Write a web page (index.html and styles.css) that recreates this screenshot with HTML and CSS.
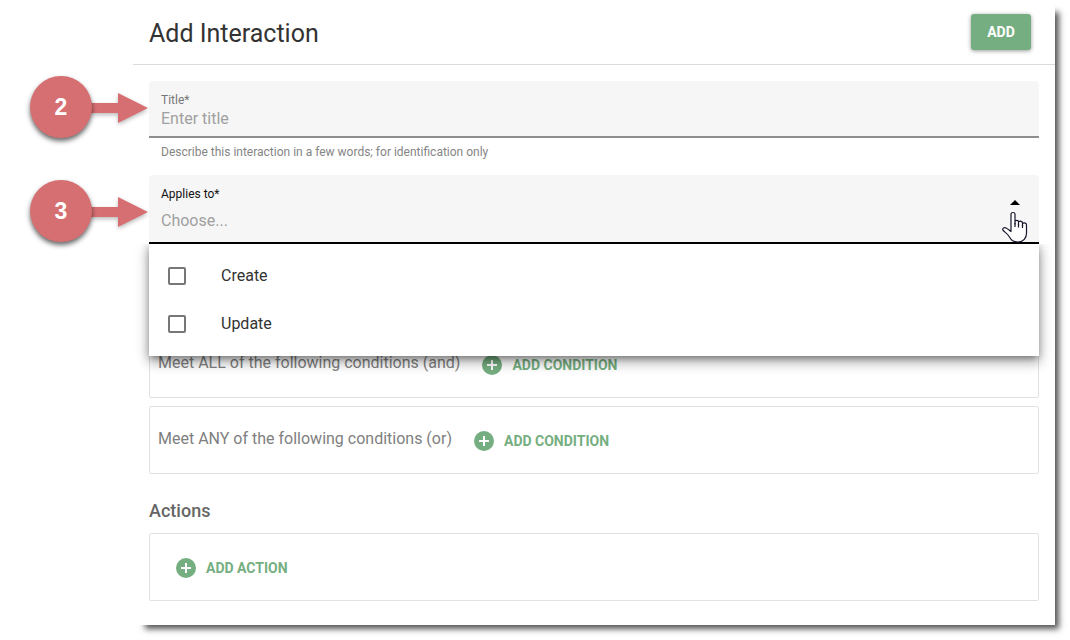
FILE: index.html
```html
<!DOCTYPE html>
<html lang="en">
<head>
<meta charset="utf-8">
<title>Add Interaction</title>
<link rel="stylesheet" href="styles.css">
</head>
<body>
<svg class="sprite" aria-hidden="true">
  <symbol id="plus" viewBox="0 0 20 20"><circle cx="10" cy="10" r="10" fill="currentColor"/><path d="M10 5v10M5 10h10" stroke="#fff" stroke-width="2"/></symbol>
  <symbol id="arrow" viewBox="0 0 58 30"><path d="M0 10H28V0L58 15L28 30V20H0Z" fill="#d66f72"/></symbol>
</svg>
<main class="panel">
  <header class="header">
    <h1 class="title">Add Interaction</h1>
    <button class="add" type="button">ADD</button>
  </header>
  <form class="form">
    <div class="group">
      <div class="field">
        <label class="label" for="title">Title*</label>
        <input class="input" id="title" type="text" placeholder="Enter title">
      </div>
      <p class="hint">Describe this interaction in a few words; for identification only</p>
      <div class="callout"><svg class="pointer"><use href="#arrow"/></svg><span class="disc">2</span></div>
    </div>
    <div class="group">
      <div class="field field-open">
        <label class="label" for="applies">Applies to*</label>
        <button class="choose" id="applies" type="button" aria-expanded="true">Choose...</button>
        <svg class="caret" viewBox="0 0 10 5"><path d="M0 5L5 0L10 5Z"/></svg>
      </div>
      <div class="menu">
        <label class="option"><input class="check" type="checkbox"><span class="name">Create</span></label>
        <label class="option"><input class="check" type="checkbox"><span class="name">Update</span></label>
      </div>
      <div class="callout"><svg class="pointer"><use href="#arrow"/></svg><span class="disc">3</span></div>
      <svg class="cursor" viewBox="0 0 26 32"><path d="M9 19V3.500C9 .8 13 .8 13 3.500V13V11C13 8.800 16.500 9 16.500 11V14V11.500C16.500 9.500 20.500 9.800 20.500 12V15V13C20.500 11.300 24.500 11.500 24.500 14V22C24.500 27 21.500 31 16 31C11 31 9.500 29.500 7.500 26C5.500 22.500 3 21.500 1.200 19.500C-.2 17.500 2 16 4 17C6 18 7.500 19.500 9 20.500Z" fill="#fff" stroke="#15152a" stroke-width="1.200" stroke-linejoin="round"/><path d="M13 12v4M16.500 13v3.500M20.500 14v3" stroke="#15152a" stroke-width="1.200"/></svg>
    </div>
    <section class="conditions">
      <div class="box">
        <span class="rule">Meet ALL of the following conditions (and)</span>
        <button class="link" type="button"><svg class="icon"><use href="#plus"/></svg>ADD CONDITION</button>
      </div>
      <div class="box">
        <span class="rule">Meet ANY of the following conditions (or)</span>
        <button class="link" type="button"><svg class="icon"><use href="#plus"/></svg>ADD CONDITION</button>
      </div>
    </section>
    <h2 class="subtitle">Actions</h2>
    <div class="box box-action">
      <button class="link" type="button"><svg class="icon"><use href="#plus"/></svg>ADD ACTION</button>
    </div>
  </form>
</main>
</body>
</html>
```
FILE: styles.css
```css
* { box-sizing: border-box; }
body { margin: 0; padding: 0 15px 15px 133px; background: #fff; font-family: Roboto, "Liberation Sans", sans-serif; font-size: 16px; color: #333; }
button, input { font: inherit; border: 0; padding: 0; background: none; }
.sprite { display: none; }
.panel { position: relative; background: #fff; }
.panel::before { content: ""; position: absolute; z-index: -1; inset: 10px 0 0 10px; box-shadow: 3px 3px 6px 1px #555; }
.panel::after { content: ""; position: absolute; z-index: -1; inset: 0; background: #fff; }
.header { display: flex; align-items: center; justify-content: space-between; height: 65px; padding: 0 24px 0 16px; border-bottom: 1px solid #dcdcdc; }
.title { margin: 0; padding-top: 2px; font-size: 25px; font-weight: 400; color: #333; }
.add { width: 60px; height: 36px; border-radius: 3px; background: #75ae80; color: #fff; font-size: 14px; font-weight: 700; box-shadow: 0 1px 4px #0006; }
.form { padding: 16px 16px 24px; }
.group { position: relative; }
.field { display: flex; flex-direction: column; height: 57px; padding: 11px 12px 0; background: #f6f6f6; border-radius: 4px 4px 0 0; border-bottom: 2px solid #8e8e8e; }
.label { font-size: 12px; line-height: 16px; color: #777; }
.input { height: 20px; color: #333; }
.input::placeholder { color: #a0a0a0; opacity: 1; }
.hint { margin: 0; padding: 6px 12px 15px; font-size: 12px; line-height: 16px; color: #858585; }
.field-open { height: 69px; border-bottom-color: #000; }
.field-open .label { color: #111; }
.choose { height: 36px; text-align: left; color: #a0a0a0; }
.caret { position: absolute; right: 19px; top: 25px; width: 10px; height: 5px; }
.cursor { position: absolute; right: 11px; top: 36px; width: 26px; height: 32px; }
.menu { position: absolute; z-index: 1; inset: 69px 0 auto; padding: 8px 0; background: #fff; box-shadow: 0 5px 5px -3px #0003, 0 8px 10px 1px #0002, 0 3px 14px 2px #0002, 0 2px 8px #0004; clip-path: inset(0 -30px -30px); }
.option { display: flex; align-items: center; gap: 35px; height: 48px; padding-left: 19px; }
.name { padding-bottom: 2px; }
.check { appearance: none; width: 18px; height: 18px; margin: 0; border: 2px solid #777; border-radius: 2px; }
.callout { position: absolute; left: -119px; top: -5px; display: flex; align-items: center; flex-direction: row-reverse; }
.pointer { width: 58px; height: 30px; margin: 2px 0 0 -2px; overflow: visible; filter: drop-shadow(0 2px 2px #0004); }
.disc { z-index: 1; display: grid; place-items: center; width: 62px; height: 62px; border-radius: 50%; background: #d66f72; color: #fff; font: 700 23px "Liberation Sans", sans-serif; box-shadow: 0 3px 5px #0009; }
.group + .group .callout { top: 5px; }
.conditions { display: grid; gap: 8px; padding-top: 86px; }
.box { display: flex; align-items: center; gap: 22px; height: 68px; padding: 0 8px; border: 1px solid #e2e2e2; border-radius: 2px; }
.rule { padding-bottom: 4px; color: #808080; }
.link { display: flex; align-items: center; gap: 10px; height: 36px; padding-top: 2px; color: #75ae80; font-size: 14px; font-weight: 700; }
.icon { width: 20px; height: 20px; }
.subtitle { margin: 0; padding: 25px 0 10px; font-size: 18px; line-height: 24px; font-weight: 500; color: #666; }
.box-action { padding: 0 26px; }
```
